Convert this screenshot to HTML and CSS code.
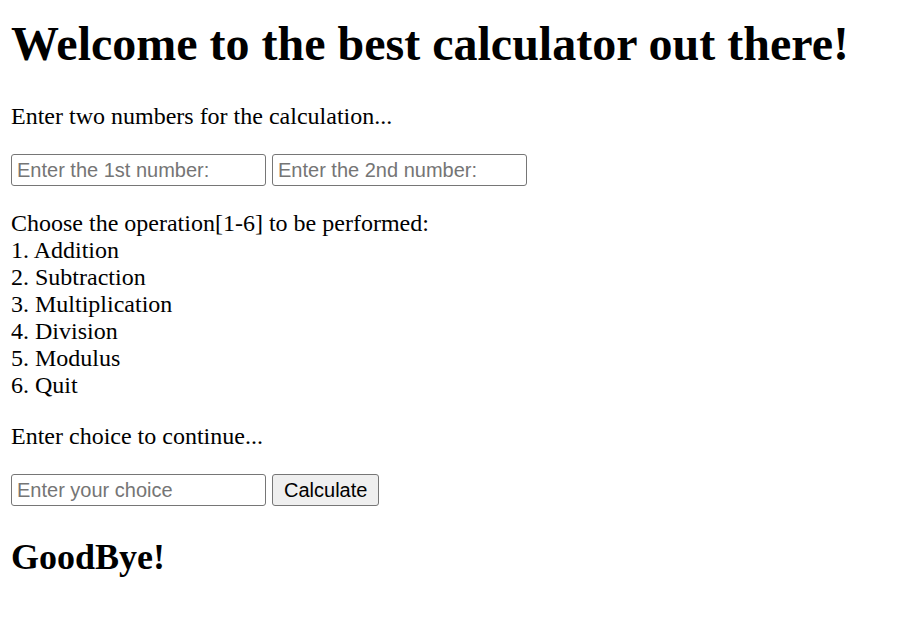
FILE: index.html
```html
<!DOCTYPE html>
<html>
<head>
<meta charset="utf-8">
<title>Calculator</title>
<link rel="stylesheet" href="styles.css">
</head>
<body>
<h1 class="title">Welcome to the best calculator out there!</h1>
<p class="text">Enter two numbers for the calculation...</p>
<p class="row"><input class="field" type="text" placeholder="Enter the 1st number:"> <input class="field" type="text" placeholder="Enter the 2nd number:"></p>
<p class="text">Choose the operation[1-6] to be performed:<br>1. Addition<br>2. Subtraction<br>3. Multiplication<br>4. Division<br>5. Modulus<br>6. Quit</p>
<p class="text">Enter choice to continue...</p>
<p class="row"><input class="field" type="text" placeholder="Enter your choice"> <button class="btn" type="button">Calculate</button></p>
<h2 class="bye">GoodBye!</h2>
</body>
</html>
```

FILE: styles.css
```css
html { background: #fff; }
body {
  margin: 12px 11px;
  font-family: "Liberation Serif", "Times New Roman", serif;
  font-size: 24px;
  color: #000;
}
.title {
  font-size: 48px;
  font-weight: bold;
  margin: 4px 0 32px 0;
}
.text {
  margin: 24px 0;
}
.row {
  margin: 24px 0;
}
.field {
  box-sizing: border-box;
  width: 255px;
  height: 32px;
  font-family: "Liberation Sans", Arial, sans-serif;
  font-size: 20px;
  padding: 1px 5px;
  border: 1px solid #767676;
  border-radius: 3px;
  background: #fff;
  color: #000;
  vertical-align: baseline;
}
.field::placeholder {
  color: #757575;
  opacity: 1;
}
.btn {
  box-sizing: border-box;
  height: 32px;
  font-family: "Liberation Sans", Arial, sans-serif;
  font-size: 20px;
  padding: 1px 11px;
  border: 1px solid #767676;
  border-radius: 3px;
  background: #efefef;
  color: #000;
}
.bye {
  font-size: 36px;
  font-weight: bold;
  margin: 30px 0;
}
```
